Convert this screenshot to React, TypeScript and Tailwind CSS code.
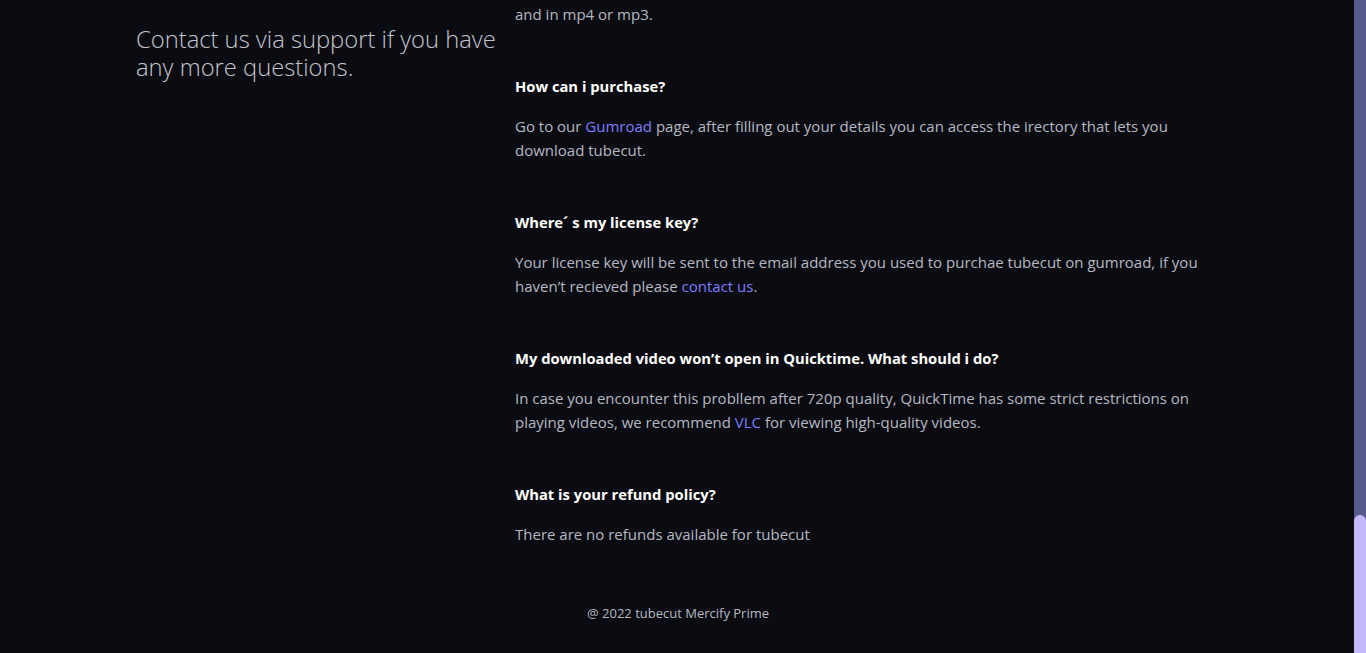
const body = "text-[15px] leading-6 text-[#b6b9c3]";
const heading = "text-[14.75px] leading-6 font-bold text-white";
const link = "text-[#7d7dff]";

function Faq({ q, children }: { q: string; children: React.ReactNode }) {
  return (
    <div className="mt-12">
      <h3 className={heading}>{q}</h3>
      <p className={`${body} mt-4`}>{children}</p>
    </div>
  );
}

export default function App() {
  return (
    <div
      className="flex h-[653px] overflow-hidden bg-[#0b0c11]"
      style={{ fontFamily: '"Open Sans", "Noto Sans", sans-serif' }}
    >
      <div className="flex flex-1 flex-col">
        <div className="flex flex-1">
          {/* left column */}
          <aside className="w-[515px] shrink-0 pl-[136px] pt-[25px]">
            <p className="text-[23.75px] leading-7 font-light text-[#c3c6ce] whitespace-nowrap">
              Contact us via support if you have
              <br />
              any more questions.
            </p>
          </aside>

          {/* faq */}
          <section className="w-[720px] pt-[2px]">
            <p className={body}>and in mp4 or mp3.</p>

            <Faq q="How can i purchase?">
              Go to our <span className={link}>Gumroad</span> page, after filling out your details you can access the irectory that lets you
              <br />
              download tubecut.
            </Faq>

            <Faq q="Where´ s my license key?">
              Your license key will be sent to the email address you used to purchae tubecut on gumroad, if you
              <br />
              haven’t recieved please <span className={link}>contact us</span>.
            </Faq>

            <Faq q="My downloaded video won’t open in Quicktime. What should i do?">
              In case you encounter this probllem after 720p quality, QuickTime has some strict restrictions on
              <br />
              playing videos, we recommend <span className={link}>VLC</span> for viewing high-quality videos.
            </Faq>

            <Faq q="What is your refund policy?">There are no refunds available for tubecut</Faq>
          </section>
        </div>

        <footer className="pl-[587px] pb-[30px] text-[13px] leading-5 text-[#b6b9c3]">
          @ 2022 tubecut Mercify Prime
        </footer>
      </div>

      {/* scrollbar */}
      <div className="flex w-3 shrink-0 flex-col justify-end bg-[#575a8b]">
        <div className="h-[138px] rounded-t-full bg-[#c5b9fb]" />
      </div>
    </div>
  );
}
